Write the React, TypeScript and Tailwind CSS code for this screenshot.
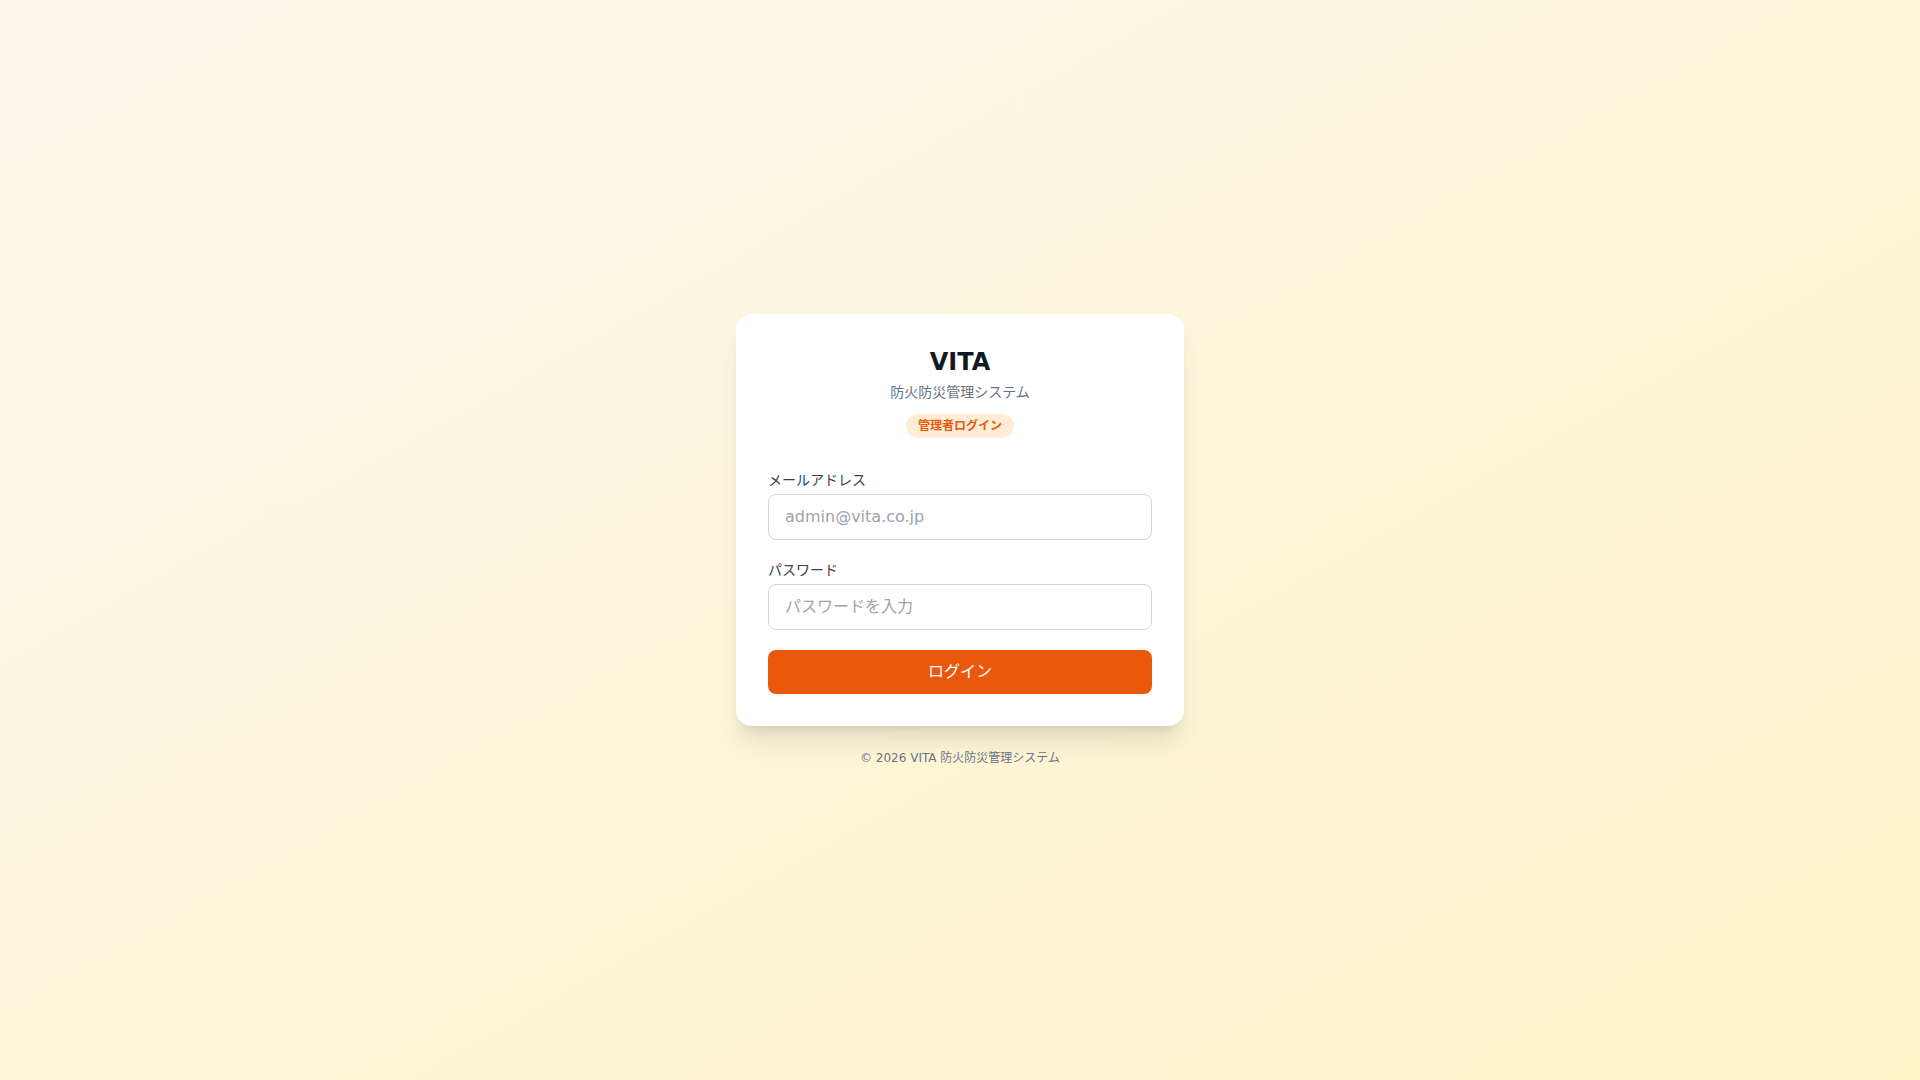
import React, { useState } from 'react';

function App() {
  const [email, setEmail] = useState('');
  const [password, setPassword] = useState('');

  return (
    <div
      className="min-h-screen bg-gradient-to-br from-[#fff7ed] to-[#fef3c7] flex flex-col items-center justify-center px-4"
      style={{ fontFamily: '"DejaVu Sans", "Noto Sans CJK JP", sans-serif' }}
    >
      <div className="w-full max-w-md bg-white rounded-2xl shadow-xl p-8">
        {/* Header */}
        <div className="text-center mb-8">
          <h1 className="text-2xl font-bold text-[#111827]">VITA</h1>
          <p className="mt-1 text-sm text-[#6b7280]">防火防災管理システム</p>
          <span className="inline-block mt-3 px-3 py-1 rounded-full bg-[#ffedd5] text-[#ea580c] text-xs font-semibold">
            管理者ログイン
          </span>
        </div>

        <form className="flex flex-col gap-5" onSubmit={(e) => e.preventDefault()}>
          <div>
            <label className="block text-sm font-normal text-[#374151] mb-1">メールアドレス</label>
            <input
              type="email"
              value={email}
              onChange={(e) => setEmail(e.target.value)}
              placeholder="admin@vita.co.jp"
              className="w-full px-4 py-2.5 border border-[#d1d5db] rounded-lg text-base text-[#111827] placeholder-[#9ca3af] outline-none"
            />
          </div>
          <div>
            <label className="block text-sm font-normal text-[#374151] mb-1">パスワード</label>
            <input
              type="password"
              value={password}
              onChange={(e) => setPassword(e.target.value)}
              placeholder="パスワードを入力"
              className="w-full px-4 py-2.5 border border-[#d1d5db] rounded-lg text-base text-[#111827] placeholder-[#9ca3af] outline-none"
            />
          </div>
          <button
            type="submit"
            className="w-full py-2.5 bg-[#ea580c] hover:bg-[#c2410c] text-white text-base font-normal rounded-lg transition-colors"
          >
            ログイン
          </button>
        </form>
      </div>

      <p className="mt-6 text-xs text-[#6b7280]">© 2026 VITA 防火防災管理システム</p>
    </div>
  );
}

export default App;
